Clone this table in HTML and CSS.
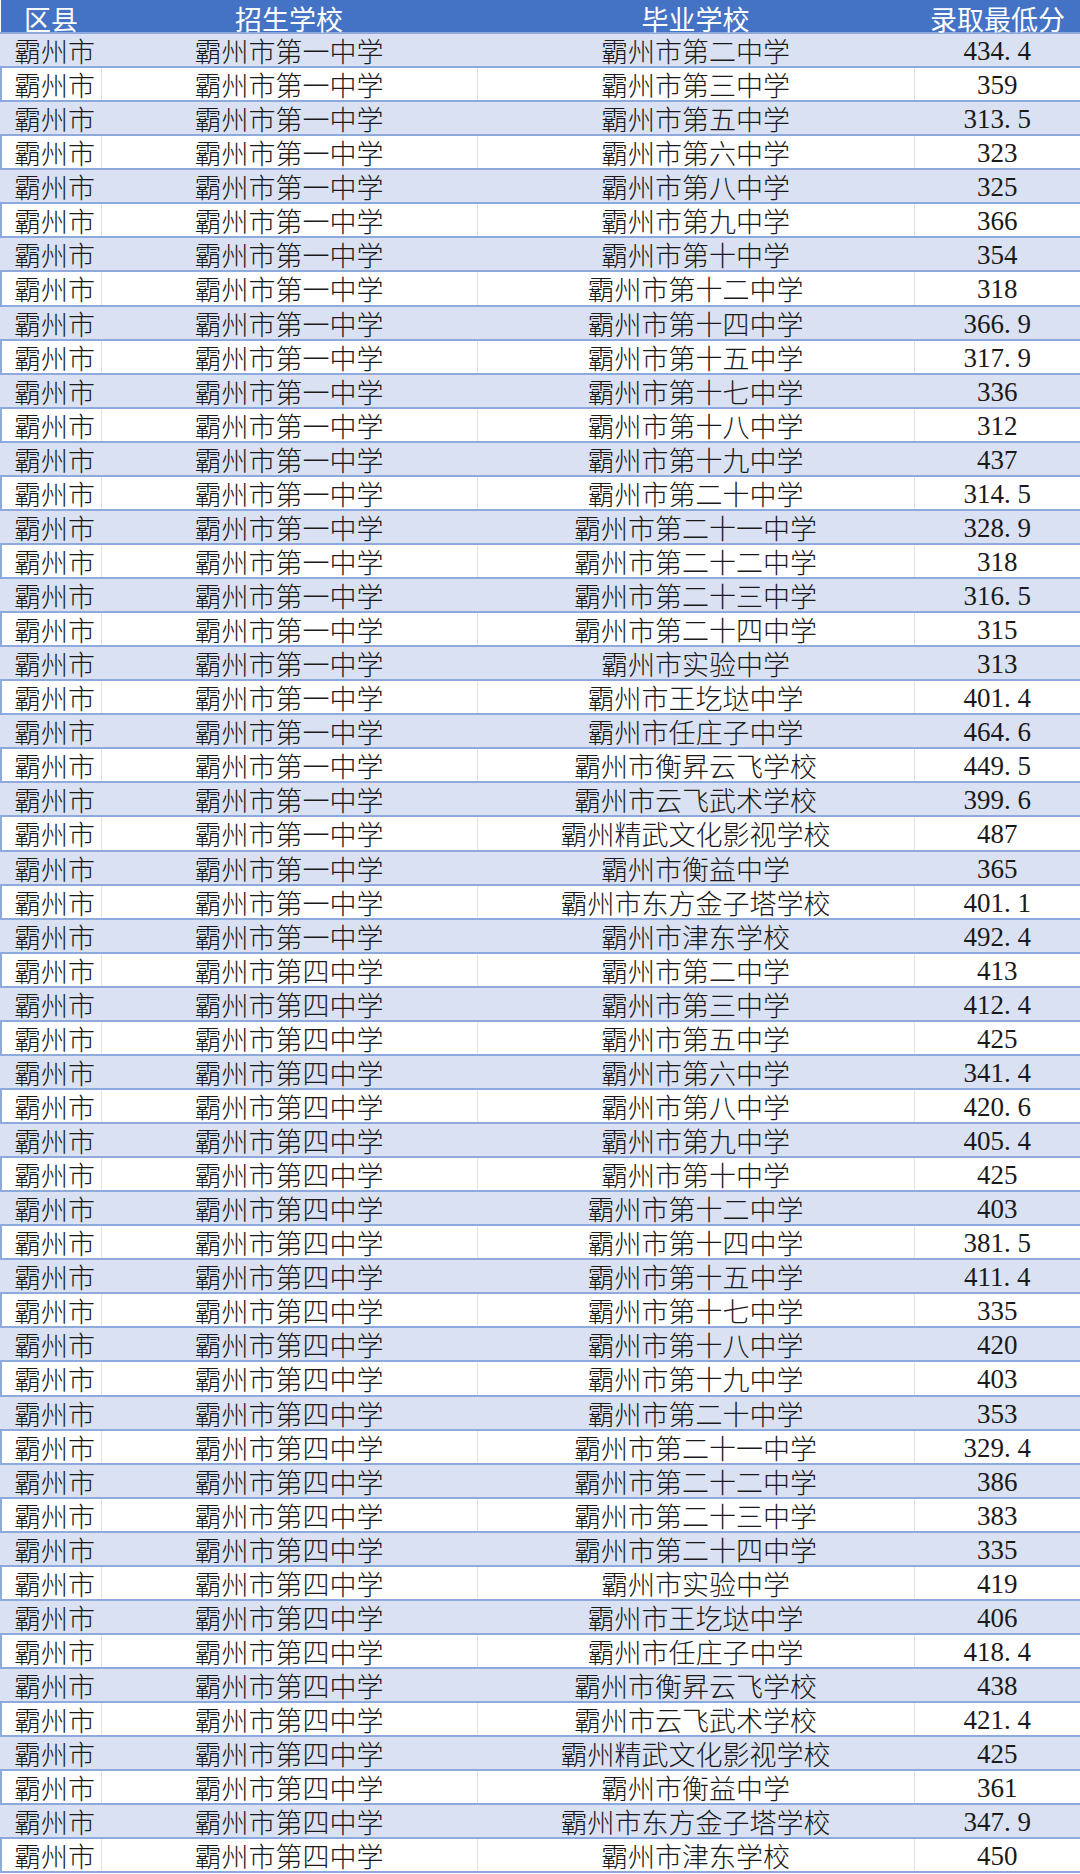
FILE: index.html
```html
<!DOCTYPE html>
<html lang="zh-CN">
<head>
<meta charset="utf-8">
<title>录取最低分</title>
<link rel="stylesheet" href="styles.css">
</head>
<body>
<table class="scores">
  <colgroup>
    <col class="c-county">
    <col class="c-school">
    <col class="c-grad">
    <col class="c-score">
  </colgroup>
  <thead>
    <tr><th>区县</th><th>招生学校</th><th>毕业学校</th><th>录取最低分</th></tr>
  </thead>
  <tbody id="rows"></tbody>
</table>
<script src="app.js"></script>
</body>
</html>
```
FILE: app.js
```js
var grads = ["霸州市第二中学","霸州市第三中学","霸州市第五中学","霸州市第六中学","霸州市第八中学","霸州市第九中学","霸州市第十中学","霸州市第十二中学","霸州市第十四中学","霸州市第十五中学","霸州市第十七中学","霸州市第十八中学","霸州市第十九中学","霸州市第二十中学","霸州市第二十一中学","霸州市第二十二中学","霸州市第二十三中学","霸州市第二十四中学","霸州市实验中学","霸州市王圪垯中学","霸州市任庄子中学","霸州市衡昇云飞学校","霸州市云飞武术学校","霸州精武文化影视学校","霸州市衡益中学","霸州市东方金子塔学校","霸州市津东学校"];
var s1 = ["434.4","359","313.5","323","325","366","354","318","366.9","317.9","336","312","437","314.5","328.9","318","316.5","315","313","401.4","464.6","449.5","399.6","487","365","401.1","492.4"];
var s2 = ["413","412.4","425","341.4","420.6","405.4","425","403","381.5","411.4","335","420","403","353","329.4","386","383","335","419","406","418.4","438","421.4","425","361","347.9","450"];
var tb = document.getElementById("rows");
function num(v){
  var p = v.split(".");
  if (p.length === 1) return p[0];
  return p[0] + '<span class="dot">.</span>' + p[1];
}
function add(school, scores){
  for (var i = 0; i < grads.length; i++){
    var tr = document.createElement("tr");
    tr.innerHTML = '<td class="county">霸州市</td><td class="center">' + school + '</td><td class="center">' + grads[i] + '</td><td class="center num">' + num(scores[i]) + '</td>';
    tb.appendChild(tr);
  }
}
add("霸州市第一中学", s1);
add("霸州市第四中学", s2);
```
FILE: styles.css
```css
html, body {
  margin: 0;
  padding: 0;
  background: #ffffff;
}
.scores {
  width: 1080px;
  border-collapse: collapse;
  table-layout: fixed;
  font-family: "Noto Sans CJK SC", "Noto Sans", sans-serif;
  font-size: 27px;
  color: #1a1a1a;
}
.c-county { width: 100px; }
.c-school { width: 376px; }
.c-grad { width: 437px; }
.c-score { width: 167px; }
.scores thead th {
  height: 26px;
  padding: 6px 0 0 0;
  background: #4472c4;
  color: #ffffff;
  font-weight: 400;
  line-height: 26px;
  text-align: center;
  vertical-align: top;
  border-bottom: 2px solid #8ea9db;
}
.scores tbody td {
  height: 30.07px;
  padding: 2px 0 0 0;
  line-height: 30px;
  white-space: nowrap;
  font-weight: 300;
  border-bottom: 2px solid #8ea9db;
  border-left: 1px solid #e2e2e2;
  vertical-align: top;
}
.scores tbody tr:nth-child(odd) td {
  background: #d9e1f2;
  border-left-color: #d9e1f2;
}
.scores tbody td:first-child {
  border-left: 2px solid #8ea9db;
}
.scores tbody td:last-child {
  border-right: 2px solid #8ea9db;
}
.scores tbody td.county {
  text-align: left;
  padding-left: 12px;
}
.center {
  text-align: center;
}
.scores tbody td.num {
  font-family: "Liberation Serif", "DejaVu Serif", serif;
  font-size: 27px;
  font-weight: 400;
}
.dot {
  padding-right: 0.25em;
}
```
